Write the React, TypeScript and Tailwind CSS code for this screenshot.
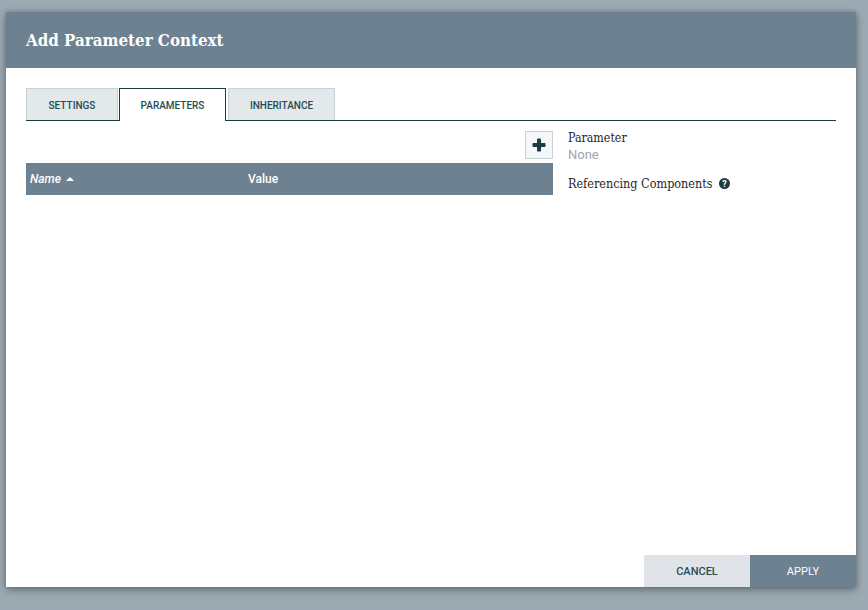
import React from "react";

const roboto = "font-['Roboto',sans-serif]";
const serif = "font-['DejaVu_Serif_Condensed','DejaVu_Serif',serif]";

function Tab({ label, active, w }: { label: string; active?: boolean; w: string }) {
  return (
    <div
      className={`${w} flex items-center justify-center text-[10px] font-medium uppercase text-[#264c53] ${
        active
          ? "h-[33px] -mb-px bg-white border border-[#1c3c42] border-b-0 relative z-10"
          : "h-[32px] pt-0.5 bg-[#e3e8eb] border border-[#c7d2d7] border-b-0"
      }`}
    >
      {label}
    </div>
  );
}

export default function App() {
  return (
    <div className={`w-[868px] h-[610px] overflow-hidden bg-[#9ba9b2] pt-3 pl-1.5 ${roboto}`}>
      <div className="w-[850px] h-[575px] bg-white flex flex-col shadow-[0_3px_8px_rgba(0,0,0,0.3),0_0_5px_rgba(0,0,0,0.2)]">
        <div className="h-14 shrink-0 pt-0.5 bg-[#6e8190] flex items-center pl-5">
          <span className={`${serif} text-white text-[16.8px] font-bold`}>Add Parameter Context</span>
        </div>

        <div className="flex-1 flex flex-col px-5 pt-5 min-h-0">
          <div className="flex items-start gap-px h-[33px] border-b border-[#1c3c42]">
            <Tab label="Settings" w="w-[92px]" />
            <Tab label="Parameters" active w="w-[107px]" />
            <Tab label="Inheritance" w="w-[107px] ml-px" />
          </div>

          <div className="flex flex-1 mt-[10px] min-h-0">
            <div className="w-[527px] shrink-0 flex flex-col">
              <div className="flex justify-end h-[32px]">
                <div className="w-7 h-7 bg-[#f5f7f8] border border-[#c7d2d7] flex items-center justify-center">
                  <svg width="14" height="14" viewBox="0 0 14 14" fill="#1c3c42" aria-hidden="true">
                    <rect x="5" y="0.5" width="4" height="13" rx="0.8" />
                    <rect x="0.5" y="5" width="13" height="4" rx="0.8" />
                  </svg>
                </div>
              </div>
              <div className="h-8 bg-[#6e8190] flex items-center text-white text-xs font-medium">
                <div className="w-[222px] pl-1 flex items-center gap-1 italic">
                  Name
                  <svg width="8" height="4" viewBox="0 0 8 4" fill="#ffffff" className="ml-px" aria-hidden="true">
                    <path d="M4 0L8 4H0Z" />
                  </svg>
                </div>
                <div>Value</div>
              </div>
            </div>

            <div className="pl-[15px] -mt-px flex flex-col">
              <div className={`${serif} text-[#262626] text-[12.3px] leading-[17px]`}>Parameter</div>
              <div className="-mt-px text-[#a6a6a6] text-[13px] leading-[17px]">None</div>
              <div className="flex items-center gap-[6px] mt-3">
                <span className={`${serif} text-[#262626] text-[12.5px] leading-[17px]`}>Referencing Components</span>
                <svg width="11" height="11" viewBox="0 0 11 11" aria-hidden="true">
                  <circle cx="5.5" cy="5.5" r="5.5" fill="#1c3c42" />
                  <text x="5.5" y="8.8" textAnchor="middle" fontSize="9" fontWeight="700" fill="#ffffff" fontFamily="Roboto, sans-serif">?</text>
                </svg>
              </div>
            </div>
          </div>
        </div>

        <div className="flex justify-end shrink-0">
          <div className="w-[106px] h-8 pt-0.5 bg-[#e0e4e8] text-[#264c53] text-[11px] font-medium flex items-center justify-center">CANCEL</div>
          <div className="w-[106px] h-8 pt-0.5 bg-[#6e8190] text-white text-[11px] font-normal flex items-center justify-center">APPLY</div>
        </div>
      </div>
    </div>
  );
}
